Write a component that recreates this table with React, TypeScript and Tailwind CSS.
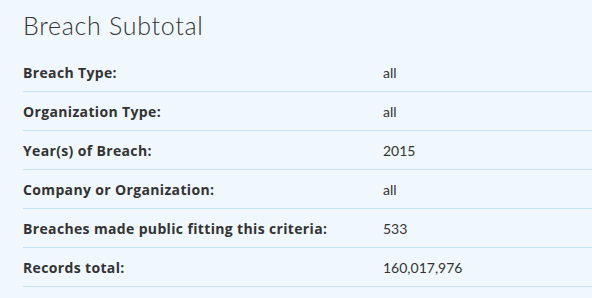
export default function App() {
  const rows: [string, string][] = [
    ["Breach Type:", "all"],
    ["Organization Type:", "all"],
    ["Year(s) of Breach:", "2015"],
    ["Company or Organization:", "all"],
    ["Breaches made public fitting this criteria:", "533"],
    ["Records total:", "160,017,976"],
  ];
  return (
    <div className="w-[592px] h-[298px] bg-[#f0f8fd] pl-[23px] pt-[9px] text-[#333] overflow-hidden" style={{ fontFamily: "Lato, 'Open Sans', sans-serif" }}>
      <h1 className="text-[25px] font-light leading-[32px] tracking-[0.7px] mb-[12px]">Breach Subtotal</h1>
      <div className="flex flex-col">
        {rows.map(([k, v]) => (
          <div key={k} className="flex items-center h-[39px] border-b border-[#c6e3f3]">
            <div className="w-[360px] font-bold text-[14px] tracking-[0.35px] font-['Open_Sans',sans-serif]">{k}</div>
            <div className="text-[14px]">{v}</div>
          </div>
        ))}
      </div>
    </div>
  );
}
